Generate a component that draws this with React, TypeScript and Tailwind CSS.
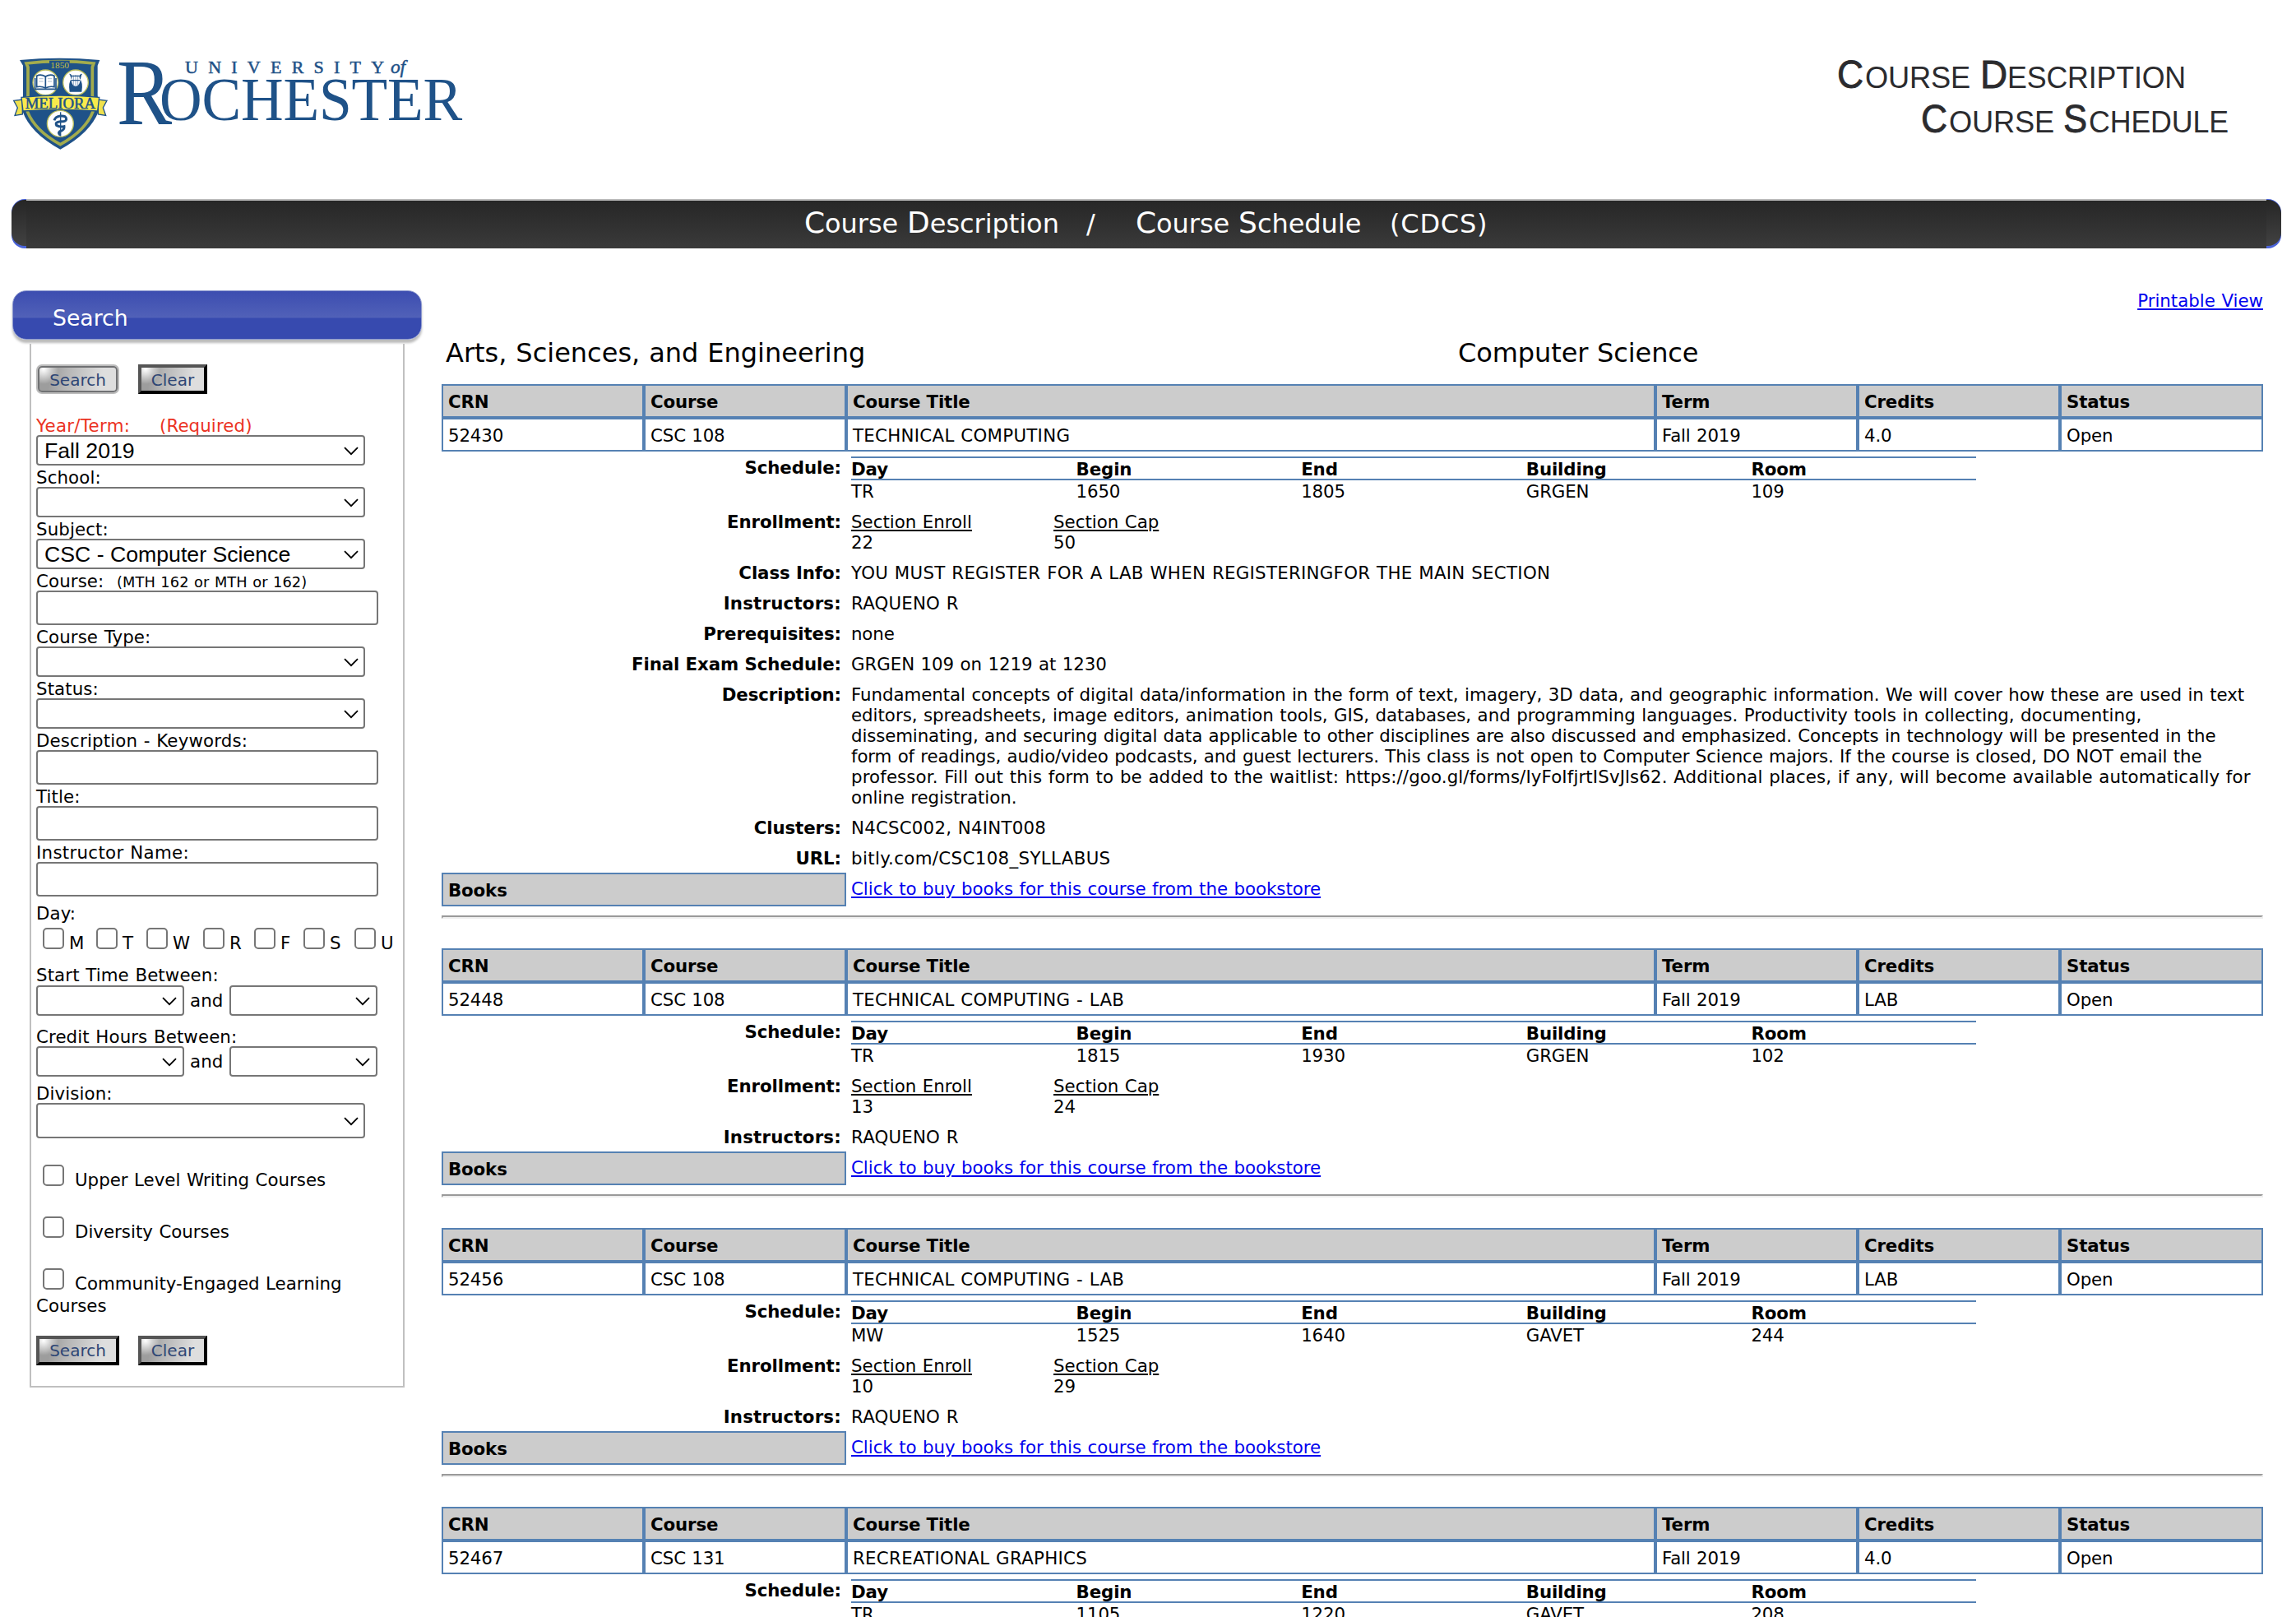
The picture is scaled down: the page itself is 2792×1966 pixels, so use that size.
import React from "react";

const navy = "#1f5288";

function Logo() {
  return (
    <svg width="560" height="120" viewBox="0 0 560 120" className="block overflow-visible">
      <g transform="translate(-5 -6) scale(0.33333)">
        <path d="M42 24 Q186 10 334 24 L326 44 V150 L330 210 Q300 290 190 350 Q80 290 52 210 L54 150 V44 Z" fill={navy} />
        <path
          d="M66 36 Q186 22 312 36 L307 50 V160 L309 212 Q282 282 190 332 Q98 282 70 212 L72 160 V50 Z"
          fill="none"
          stroke="#a3ac4d"
          strokeWidth="11"
        />
        <rect x="150" y="26" width="74" height="32" fill={navy} />
        <text x="154" y="54" fontSize="34" fill="#c3bf3f" fontFamily="Liberation Serif, serif" textLength="68" lengthAdjust="spacingAndGlyphs">
          1850
        </text>
        <g stroke="#b9bd5c" strokeWidth="4" fill="#fff">
          <circle cx="136" cy="106" r="46" />
          <circle cx="246" cy="106" r="46" />
          <circle cx="190" cy="256" r="48" />
        </g>
        <g fill="none" stroke={navy} strokeWidth="5">
          <path d="M136 84 Q118 74 104 82 V122 Q120 118 136 126 Q152 118 168 122 V82 Q154 74 136 84 Z" fill="#fff" />
          <path d="M136 84 V126" />
          <path d="M98 90 V130 H174 V90" />
          <path d="M112 92 H128 M112 102 H128 M144 92 H160 M144 102 H160" strokeWidth="2" stroke="#7f9bbb" />
        </g>
        <path d="M222 74 Q234 74 232 90 Q218 106 224 140 H268 Q274 106 260 90 Q258 74 270 74 L266 82 Q262 120 246 120 Q230 120 228 82 Z" fill={navy} />
        <path d="M238 80 V118 M246 78 V118 M254 80 V118" stroke="#8fa8c4" strokeWidth="3" />
        <path d="M226 82 H266 M230 98 H262" stroke={navy} strokeWidth="4" />
        <path
          d="M168 244 Q172 230 190 228 Q212 226 212 240 Q210 250 190 248 Q170 250 176 262 Q190 270 204 266 Q206 280 188 284 Q180 290 190 298"
          fill="none"
          stroke={navy}
          strokeWidth="9"
        />
        <path d="M191 214 V302" stroke={navy} strokeWidth="4" />
        <path d="M20 172 L52 168 V222 L24 226 L34 198 Z M360 172 L328 168 V222 L356 226 L346 198 Z" fill="#efe14d" stroke={navy} strokeWidth="4" />
        <path d="M48 160 Q190 146 332 160 L326 210 Q190 200 54 210 Z" fill="#f8ea4c" stroke={navy} strokeWidth="4" />
        <text x="62" y="201" fontSize="54" fill={navy} stroke={navy} strokeWidth="1.5" fontFamily="Liberation Serif, serif" textLength="256" lengthAdjust="spacingAndGlyphs">
          MELIORA
        </text>
      </g>
      <g fill={navy} fontFamily="Liberation Serif, serif">
        <text x="127" y="80" fontSize="115" textLength="67" lengthAdjust="spacingAndGlyphs">
          R
        </text>
        <text x="179" y="74.5" fontSize="74" textLength="368" lengthAdjust="spacingAndGlyphs">
          OCHESTER
        </text>
        <text x="210" y="18" fontSize="22" stroke={navy} strokeWidth="0.5" textLength="242" lengthAdjust="spacing">
          UNIVERSITY
        </text>
        <text x="460" y="18" fontSize="24" stroke={navy} strokeWidth="0.5" fontStyle="italic" textLength="18" lengthAdjust="spacingAndGlyphs">
          of
        </text>
      </g>
    </svg>
  );
}

function HeaderTitle() {
  return (
    <svg width="500" height="110" viewBox="0 0 500 110" className="block" fill="#2b2b2e" stroke="#2b2b2e" fontFamily="Liberation Sans, sans-serif">
      <g strokeWidth="0.8">
        <text x="4" y="47" fontSize="48" textLength="32" lengthAdjust="spacingAndGlyphs">C</text>
        <text x="178" y="47" fontSize="48" textLength="33" lengthAdjust="spacingAndGlyphs">D</text>
        <text x="106" y="101" fontSize="48" textLength="32" lengthAdjust="spacingAndGlyphs">C</text>
        <text x="279" y="101" fontSize="48" textLength="29" lengthAdjust="spacingAndGlyphs">S</text>
      </g>
      <g stroke="none">
        <text x="38" y="47" fontSize="36" textLength="128" lengthAdjust="spacingAndGlyphs">OURSE</text>
        <text x="211" y="47" fontSize="36" textLength="217" lengthAdjust="spacingAndGlyphs">ESCRIPTION</text>
        <text x="140" y="101" fontSize="36" textLength="128" lengthAdjust="spacingAndGlyphs">OURSE</text>
        <text x="310" y="101" fontSize="36" textLength="170" lengthAdjust="spacingAndGlyphs">CHEDULE</text>
      </g>
    </svg>
  );
}

function Chevron() {
  return (
    <svg width="18" height="11" viewBox="0 0 18 11" className="mt-px" fill="none" stroke="#000" strokeWidth="1.8">
      <path d="M1 1.2 L9 9.2 L17 1.2" />
    </svg>
  );
}

function Select({ value = "", className = "h-[37px] w-[400px] pr-[6px]" }: { value?: string; className?: string }) {
  return (
    <div
      className={`flex items-center justify-between rounded-[4px] border-2 border-[#767676] bg-white pl-[8px] font-['Liberation_Sans',sans-serif] text-[26.67px] leading-[31px] tracking-normal [word-spacing:0] ${className}`}
    >
      <span className="pt-px">{value}</span>
      <Chevron />
    </div>
  );
}

function Input() {
  return <div className="h-[42px] w-[416px] rounded-[4px] border-2 border-[#767676] bg-white" />;
}

function Label({ children, className = "pt-[2px]" }: { children: React.ReactNode; className?: string }) {
  return <div className={`h-[26px] leading-[25px] whitespace-pre ${className}`}>{children}</div>;
}

function Checkbox() {
  return <span className="size-[26px] shrink-0 rounded-[5px] border-2 border-[#767676] bg-white" />;
}

function BevelButton({ children, className }: { children: string; className: string }) {
  return (
    <div
      className={`flex h-[36px] items-center justify-center border-4 border-t-[#555] border-r-black border-b-black border-l-[#555] bg-[radial-gradient(circle_at_5px_2px,#fff_0,transparent_18px),linear-gradient(100deg,#9d9d9d_15%,#b5b5b5_35%,#dedede_80%)] text-[20px] tracking-normal text-[#2e4675] ${className}`}
    >
      {children}
    </div>
  );
}

function Between() {
  return (
    <div className="flex items-center">
      <Select className="h-[37px] w-[180px] pr-[7px]" />
      <span className="w-[55px] pl-[7px]">and</span>
      <Select className="h-[37px] w-[180px] pr-[7px]" />
    </div>
  );
}

function Sidebar() {
  const days = ["M", "T", "W", "R", "F", "S", "U"];
  return (
    <aside className="w-[500px] tracking-[0.1px]">
      <div className="ml-[1px] h-[66px] pt-[1px]">
        <div className="h-[60px] w-[498px] rounded-[17px] border border-[#8f9bcf] bg-[linear-gradient(180deg,#3c4db0_0px,#5161b8_32px,#374aaf_33px,#374aaf_100%)] pt-[17px] pl-[48px] text-[26.67px] leading-[32px] tracking-normal text-white shadow-[0_4px_3px_#bbb]">
          Search
        </div>
      </div>
      <div className="ml-[22px] flex h-[1269px] w-[456px] flex-col border-2 border-t-0 border-[#c0c0c0] pt-[25px] pl-[6px]">
        <div className="flex gap-[23px]">
          <div className="flex h-[36px] w-[101px] items-center justify-center rounded-[7px] border-2 border-[#bcbcbc]">
            <div className="flex h-full w-full items-center justify-center rounded-[5px] border-2 border-[#707173] bg-[radial-gradient(circle_at_5px_2px,#fff_0,transparent_18px),linear-gradient(100deg,#9d9d9d_15%,#b5b5b5_35%,#dedede_80%)] pt-px text-[20px] tracking-normal text-[#2e4675]">
              Search
            </div>
          </div>
          <BevelButton className="w-[84px] pt-px">Clear</BevelButton>
        </div>
        <Label className="mt-6 pt-[2px] text-[#eb3323]">
          <span className="inline-block w-[150px] tracking-[0.3px]">Year/Term:</span>(Required)
        </Label>
        <Select value="Fall 2019" />
        <Label>School:</Label>
        <Select />
        <Label>Subject:</Label>
        <Select value="CSC - Computer Science" />
        <Label>
          <span className="inline-block w-[98px]">Course:</span>
          <span className="text-[17.78px]">(MTH 162 or MTH or 162)</span>
        </Label>
        <Input />
        <Label>Course Type:</Label>
        <Select />
        <Label>Status:</Label>
        <Select />
        <Label className="pt-[2px] tracking-[0.15px]">Description - Keywords:</Label>
        <Input />
        <Label>Title:</Label>
        <Input />
        <Label className="pt-[2px] tracking-[0.3px]">Instructor Name:</Label>
        <Input />
        <Label className="mt-[7px] pt-px">Day:</Label>
        <div className="mt-[5px] grid h-[44px] grid-cols-[65px_61px_69px_62px_60px_62px_50px]">
          {days.map((d) => (
            <div key={d} className="flex gap-[6px] pl-2">
              <Checkbox />
              <span className="pt-[6px] leading-[25px]">{d}</span>
            </div>
          ))}
        </div>
        <Label className="pt-px">Start Time Between:</Label>
        <Between />
        <Label className="mt-[11px] pt-[2px]">Credit Hours Between:</Label>
        <Between />
        <Label className="mt-[7px] pt-px">Division:</Label>
        <Select className="-mt-px h-[43px] w-[400px] pr-[6px]" />
        <div className="mt-[32px] flex h-[63px] gap-[13px] pl-2 tracking-[0px]">
          <Checkbox />
          <span className="pt-[6px] leading-[25px]">Upper Level Writing Courses</span>
        </div>
        <div className="flex h-[63px] gap-[13px] pl-2 tracking-[0px]">
          <Checkbox />
          <span className="pt-[6px] leading-[25px]">Diversity Courses</span>
        </div>
        <div className="flex h-[33px] gap-[13px] pl-2 tracking-[0px]">
          <Checkbox />
          <span className="pt-[6px] leading-[25px]">Community-Engaged Learning</span>
        </div>
        <div className="leading-[26px] tracking-[0px]">Courses</div>
        <div className="mt-[23px] flex gap-[23px]">
          <BevelButton className="w-[101px]">Search</BevelButton>
          <BevelButton className="w-[84px]">Clear</BevelButton>
        </div>
      </div>
    </aside>
  );
}

type Line = { text: string; tracking?: string };
type Detail = { label: string; lines: Line[] };
type Course = {
  crn: string;
  course: string;
  title: string;
  credits: string;
  meeting: string[];
  enroll: string;
  cap: string;
  details: Detail[];
  gap: string;
};

const instructor: Detail = { label: "Instructors:", lines: [{ text: "RAQUENO R", tracking: "tracking-[0.18px]" }] };

const courses: Course[] = [
  {
    crn: "52430",
    course: "CSC 108",
    title: "TECHNICAL COMPUTING",
    credits: "4.0",
    meeting: ["TR", "1650", "1805", "GRGEN", "109"],
    enroll: "22",
    cap: "50",
    gap: "h-[51px]",
    details: [
      {
        label: "Class Info:",
        lines: [{ text: "YOU MUST REGISTER FOR A LAB WHEN REGISTERINGFOR THE MAIN SECTION", tracking: "tracking-[0.27px]" }],
      },
      instructor,
      { label: "Prerequisites:", lines: [{ text: "none" }] },
      { label: "Final Exam Schedule:", lines: [{ text: "GRGEN 109 on 1219 at 1230", tracking: "tracking-[-0.05px]" }] },
      {
        label: "Description:",
        lines: [
          {
            text: "Fundamental concepts of digital data/information in the form of text, imagery, 3D data, and geographic information. We will cover how these are used in text",
            tracking: "tracking-[-0.05px]",
          },
          {
            text: "editors, spreadsheets, image editors, animation tools, GIS, databases, and programming languages. Productivity tools in collecting, documenting,",
            tracking: "tracking-[-0.02px]",
          },
          {
            text: "disseminating, and securing digital data applicable to other disciplines are also discussed and emphasized. Concepts in technology will be presented in the",
            tracking: "tracking-[-0.12px]",
          },
          {
            text: "form of readings, audio/video podcasts, and guest lecturers. This class is not open to Computer Science majors. If the course is closed, DO NOT email the",
            tracking: "tracking-[-0.12px]",
          },
          {
            text: "professor. Fill out this form to be added to the waitlist: https://goo.gl/forms/IyFoIfjrtISvJls62. Additional places, if any, will become available automatically for",
            tracking: "tracking-[0.12px]",
          },
          { text: "online registration.", tracking: "tracking-[-0.05px]" },
        ],
      },
      { label: "Clusters:", lines: [{ text: "N4CSC002, N4INT008", tracking: "tracking-[0.2px]" }] },
      { label: "URL:", lines: [{ text: "bitly.com/CSC108_SYLLABUS", tracking: "tracking-[0.35px]" }] },
    ],
  },
  {
    crn: "52448",
    course: "CSC 108",
    title: "TECHNICAL COMPUTING - LAB",
    credits: "LAB",
    meeting: ["TR", "1815", "1930", "GRGEN", "102"],
    enroll: "13",
    cap: "24",
    gap: "h-[52px]",
    details: [instructor],
  },
  {
    crn: "52456",
    course: "CSC 108",
    title: "TECHNICAL COMPUTING - LAB",
    credits: "LAB",
    meeting: ["MW", "1525", "1640", "GAVET", "244"],
    enroll: "10",
    cap: "29",
    gap: "h-[51px]",
    details: [instructor],
  },
  {
    crn: "52467",
    course: "CSC 131",
    title: "RECREATIONAL GRAPHICS",
    credits: "4.0",
    meeting: ["TR", "1105", "1220", "GAVET", "208"],
    enroll: "",
    cap: "",
    gap: "h-[51px]",
    details: [],
  },
];

const heads = ["CRN", "Course", "Course Title", "Term", "Credits", "Status"];
const meetingHeads = ["Day", "Begin", "End", "Building", "Room"];

function Row({ cells, head }: { cells: string[]; head?: boolean }) {
  return (
    <div className="grid grid-cols-[246px_246px_984px_246px_246px_247px]">
      {cells.map((c, i) => (
        <div
          key={i}
          className={`h-[41px] border-2 border-[#5581b3] pt-[7px] pl-[6px] leading-[25px] ${head ? "bg-[#cccccc] font-bold [word-spacing:0]" : i === 2 ? "tracking-[0.28px]" : ""}`}
        >
          {c}
        </div>
      ))}
    </div>
  );
}

function FieldLabel({ children }: { children: string }) {
  const tracking = children === "Instructors:" ? "tracking-[0.2px]" : "tracking-[-0.1px]";
  return <div className={`w-[486px] text-right leading-[25px] font-bold [word-spacing:0] ${tracking}`}>{children}</div>;
}

function CourseBlock({ c }: { c: Course }) {
  return (
    <section className="w-[2215px]">
      <Row head cells={heads} />
      <Row cells={[c.crn, c.course, c.title, "Fall 2019", c.credits, "Open"]} />
      <div className="flex h-[65px] gap-[12px] pt-[6px]">
        <div className="pt-px">
          <FieldLabel>Schedule:</FieldLabel>
        </div>
        <div className="w-[1368px]">
          <div className="grid h-[29px] grid-cols-5 border-y-2 border-[#5581b3] leading-[25px] font-bold">
            {meetingHeads.map((h) => (
              <span key={h} className="pt-px">{h}</span>
            ))}
          </div>
          <div className="grid grid-cols-5 leading-[25px]">
            {c.meeting.map((m) => (
              <span key={m} className="pt-px">{m}</span>
            ))}
          </div>
        </div>
      </div>
      <div className="flex h-[70px] pt-[8px] leading-[25px] tracking-[0px]">
        <FieldLabel>Enrollment:</FieldLabel>
        <div className="ml-[12px] w-[246px]">
          <div className="underline decoration-2 underline-offset-[2px]">Section Enroll</div>
          <div>{c.enroll}</div>
        </div>
        <div>
          <div className="underline decoration-2 underline-offset-[2px]">Section Cap</div>
          <div>{c.cap}</div>
        </div>
      </div>
      {c.details.map((d) => (
        <div key={d.label} className="flex gap-[12px] pb-[12px] leading-[25px]">
          <FieldLabel>{d.label}</FieldLabel>
          <div className="whitespace-nowrap">
            {d.lines.map((l) => (
              <div key={l.text} className={l.tracking}>
                {l.text}
              </div>
            ))}
          </div>
        </div>
      ))}
      <div className="flex h-[34px] gap-[6px]">
        <div className="-mt-[7px] h-[41px] w-[492px] border-2 border-[#5581b3] bg-[#cccccc] pt-[7px] pl-[6px] leading-[25px] font-bold">
          Books
        </div>
        <a className="self-start leading-[25px] tracking-[-0.03px] text-[#0000ee] underline decoration-2 underline-offset-[2px]">
          Click to buy books for this course from the bookstore
        </a>
      </div>
      <div className={`pt-[11px] ${c.gap}`}>
        <div className="h-[4px] border-2 border-t-[#9a9a9a] border-r-[#eeeeee] border-b-[#eeeeee] border-l-[#9a9a9a]" />
      </div>
    </section>
  );
}

export default function App() {
  return (
    <div className="h-[1966px] w-[2792px] overflow-hidden bg-white font-['DejaVu_Sans',sans-serif] text-[21.33px] tracking-[-0.15px] text-black [word-spacing:0.73px]">
      <header className="flex h-[242px] justify-between">
        <div className="pt-[71px] pl-[15px]">
          <Logo />
        </div>
        <div className="mr-[62px] pt-[60px]">
          <HeaderTitle />
        </div>
      </header>
      <div className="ml-[14px] flex h-[60px] w-[2760px]">
        <div className="w-[18px] overflow-hidden rounded-l-[16px] bg-[#4a63d8]">
          <div className="mt-px h-[56px] rounded-l-[16px] bg-linear-to-b from-[#262626] to-[#424242]" />
        </div>
        <div className="flex flex-1 items-baseline border-t-2 border-[#bbb] bg-linear-to-b from-[#272727] to-[#3a3a3a] pt-[9px] pl-[946px] text-[32px] leading-[36px] tracking-[-0.05px] whitespace-nowrap text-white">
          <span className="w-[343px]">
            <span className="text-[36px]">C</span>ourse <span className="text-[36px]">D</span>escription
          </span>
          <span className="w-[60px]">/</span>
          <span className="w-[309px]">
            <span className="text-[36px]">C</span>ourse <span className="text-[36px]">S</span>chedule
          </span>
          <span className="tracking-[0.8px]">(CDCS)</span>
        </div>
        <div className="w-[18px] overflow-hidden rounded-r-[16px] bg-[#4a63d8]">
          <div className="mt-px h-[56px] rounded-r-[16px] bg-linear-to-b from-[#262626] to-[#424242]" />
        </div>
      </div>
      <div className="flex pt-[50px] pl-[14px]">
        <Sidebar />
        <main className="ml-[23px] w-[2215px]">
          <div className="flex h-[50px] justify-end pt-px">
            <a className="leading-[25px] tracking-normal text-[#0000ee] underline decoration-2 underline-offset-[2px]">Printable View</a>
          </div>
          <div className="flex h-[65px] pt-[7px] pl-[5px] text-[32px] leading-[40px]">
            <div className="w-[1231px] tracking-normal">Arts, Sciences, and Engineering</div>
            <div className="tracking-[-0.1px]">Computer Science</div>
          </div>
          {courses.map((c) => (
            <CourseBlock key={c.crn} c={c} />
          ))}
        </main>
      </div>
    </div>
  );
}
